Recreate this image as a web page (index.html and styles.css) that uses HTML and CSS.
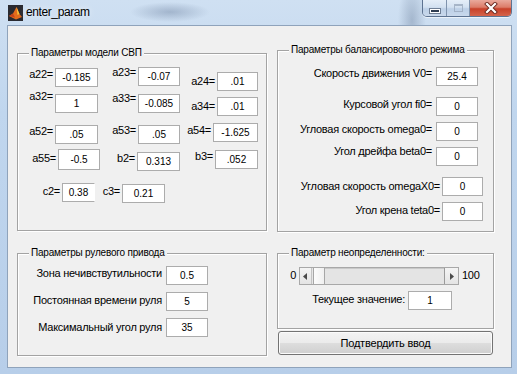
FILE: index.html
```html
<!DOCTYPE html>
<html lang="ru">
<head>
<meta charset="utf-8">
<title>enter_param</title>
<link rel="stylesheet" href="styles.css">
</head>
<body>
<div class="window">
  <div class="titlebar">
    <svg class="appicon" width="15" height="16" viewBox="0 0 15 16">
      <rect x="0" y="0" width="15" height="16" fill="#2a2a30"/>
      <path d="M1 11 L5 8.5 L8.5 2 L11.5 9 L14 12 L8 14.5 Z" fill="#e36b1c"/>
      <path d="M8.5 2 L11.5 9 L9.5 10 Z" fill="#f6c13a"/>
      <path d="M1 11 L5 8.5 L7 12.5 Z" fill="#c5421a"/>
    </svg>
    <span class="title">enter_param</span>
    <div class="controls">
      <div class="wbtn wmin"><span class="min-ic"></span></div>
      <div class="wbtn wmax"><span class="max-ic"></span></div>
      <div class="wbtn wclose">
        <svg width="14" height="12" viewBox="0 0 14 12">
          <path d="M3 2 L11 10 M11 2 L3 10" stroke="#6b2a20" stroke-width="4" stroke-linecap="square"/>
          <path d="M3 2 L11 10 M11 2 L3 10" stroke="#ffffff" stroke-width="2.2" stroke-linecap="square"/>
        </svg>
      </div>
    </div>
  </div>

  <div class="client">
    <div class="col col-left">
      <div class="panel p-model">
        <div class="ptitle">Параметры модели СВП</div>
        <div class="row mt9">
          <div class="fld"><span class="lab lw37 mt5">a22=</span><span class="box bw43 mt5">-0.185</span></div>
          <div class="fld"><span class="lab lw40 mt3">a23=</span><span class="box bw42 mt4">-0.07</span></div>
          <div class="fld"><span class="lab lw37 mt12">a24=</span><span class="box bw41 mt9">.01</span></div>
        </div>
        <div class="row mtn3">
          <div class="fld"><span class="lab lw37 mt2">a32=</span><span class="box bw43 mt6">1</span></div>
          <div class="fld"><span class="lab lw40 mt4">a33=</span><span class="box bw42 mt6">-0.085</span></div>
          <div class="fld"><span class="lab lw37 mt12">a34=</span><span class="box bw41 mt9">.01</span></div>
        </div>
        <div class="row mt7">
          <div class="fld"><span class="lab lw37 mt2">a52=</span><span class="box bw43 mt2">.05</span></div>
          <div class="fld"><span class="lab lw40 mt1">a53=</span><span class="box bw42 mt2">.05</span></div>
          <div class="fld"><span class="lab lw33 mt1">a54=</span><span class="box bw45 mt0">-1.625</span></div>
        </div>
        <div class="row mt5">
          <div class="fld"><span class="lab lw40 mt3">a55=</span><span class="box bw42 tall mt0">-0.5</span></div>
          <div class="fld"><span class="lab lw37 mt3">b2=</span><span class="box bw43 mt3">0.313</span></div>
          <div class="fld"><span class="lab lw35 mt1">b3=</span><span class="box bw43 mt1">.052</span></div>
        </div>
        <div class="row mt12">
          <div class="fld"><span class="lab lw44 mt2">c2=</span><span class="box bw33 open mt0">0.38</span></div>
          <div class="fld"><span class="lab lw27 mt2">c3=</span><span class="box bw43 mt1">0.21</span></div>
        </div>
      </div>

      <div class="panel p-rudder">
        <div class="ptitle">Параметры рулевого привода</div>
        <div class="row mt12">
          <span class="lab lw148 pr4 mt1">Зона нечивствутильности</span><span class="box bw42">0.5</span>
        </div>
        <div class="row mt7">
          <span class="lab lw148 pr4 mt2">Постоянная времени руля</span><span class="box bw42">5</span>
        </div>
        <div class="row mt7">
          <span class="lab lw148 pr4 mt3">Максимальный угол руля</span><span class="box bw42">35</span>
        </div>
      </div>
    </div>

    <div class="col col-right">
      <div class="panel p-balance">
        <div class="ptitle">Параметры балансировочного режима</div>
        <div class="row mt16">
          <span class="lab lw158 pr4 mt0">Скорость движения V0=</span><span class="box bw42">25.4</span>
        </div>
        <div class="row mt11">
          <span class="lab lw158 pr4 mt1">Курсовой угол fi0=</span><span class="box bw42">0</span>
        </div>
        <div class="row mt6">
          <span class="lab lw158 pr4 mt1">Угловая скорость omega0=</span><span class="box bw42">0</span>
        </div>
        <div class="row mt4">
          <span class="lab lw158 pr4 mt0">Угол дрейфа beta0=</span><span class="box bw42 mt2">0</span>
        </div>
        <div class="row mt11">
          <span class="lab lw164 mt3">Угловая скорость omegaX0=</span><span class="box bw41">0</span>
        </div>
        <div class="row mt6">
          <span class="lab lw164 mt2">Угол крена teta0=</span><span class="box bw41">0</span>
        </div>
      </div>

      <div class="panel p-uncert">
        <div class="ptitle">Параметр неопределенности:</div>
        <div class="row mt13">
          <span class="lab lw21 pr3 mt2">0</span>
          <div class="slider">
            <span class="sarrow sleft"><svg width="5" height="7" viewBox="0 0 5 7"><path d="M4 0 L0 3.5 L4 7 Z" fill="#4a4a4a"/></svg></span>
            <span class="sthumb"></span>
            <span class="strack"></span>
            <span class="sarrow sright"><svg width="5" height="7" viewBox="0 0 5 7"><path d="M1 0 L5 3.5 L1 7 Z" fill="#4a4a4a"/></svg></span>
          </div>
          <span class="lab max100 mt2">100</span>
        </div>
        <div class="row mt6">
          <span class="lab lw130 pr3 mt2">Текущее значение:</span><span class="box bw44">1</span>
        </div>
      </div>

      <button class="confirm" type="button">Подтвердить ввод</button>
    </div>
  </div>
</div>
</body>
</html>
```

FILE: styles.css
```css
* { box-sizing: border-box; }

html, body {
  margin: 0;
  padding: 0;
}

body {
  width: 517px;
  height: 374px;
  overflow: hidden;
  font-family: "Liberation Sans", Arial, sans-serif;
  color: #000;
}

.window {
  width: 517px;
  height: 374px;
  display: flex;
  flex-direction: column;
  background:
    radial-gradient(ellipse 40px 10px at 170px 12px, rgba(110,130,160,0.45), rgba(110,130,160,0) 100%),
    radial-gradient(ellipse 14px 40px at 412px 20px, rgba(90,110,140,0.35), rgba(90,110,140,0) 100%),
    linear-gradient(180deg, #cfe0f2 0%, #c0d6ee 30%, #b7cee9 100%);
}

/* ---------- title bar ---------- */
.titlebar {
  height: 25px;
  flex: none;
  display: flex;
  align-items: flex-start;
}

.appicon {
  margin: 5px 0 0 8px;
  flex: none;
}

.title {
  margin: 5px 0 0 3px;
  font-size: 12px;
  line-height: 15px;
  letter-spacing: -0.4px;
  color: #000;
  text-shadow: 0 0 6px rgba(255,255,255,0.9);
}

.controls {
  margin-left: auto;
  margin-right: 5px;
  display: flex;
  height: 17px;
  border: 1px solid #5d7391;
  border-top: none;
  border-radius: 0 0 5px 5px;
  overflow: hidden;
  box-shadow: 0 1px 0 rgba(255,255,255,0.6);
}

.wbtn {
  height: 16px;
  display: flex;
  align-items: center;
  justify-content: center;
}

.wmin, .wmax {
  background: linear-gradient(180deg, #e5eef8 0%, #d3e1f1 45%, #bccfe6 55%, #c9d9ec 100%);
  border-right: 1px solid #7f93ad;
}

.wmin { width: 24px; }
.wmax { width: 23px; }

.min-ic {
  width: 10px;
  height: 4px;
  margin-top: 5px;
  background: #2f3d52;
  border: 1px solid #fff;
  box-shadow: 0 0 0 1px #6f7f95;
}

.max-ic {
  width: 9px;
  height: 8px;
  border: 1px solid #9aa9bd;
  border-top-width: 2px;
  opacity: 0.8;
}

.wclose {
  width: 41px;
  background: linear-gradient(180deg, #e9a99c 0%, #dc7c69 45%, #c8412a 55%, #d4644b 100%);
}

/* ---------- client area ---------- */
.client {
  margin-left: 7px;
  width: 505px;
  height: 343px;
  border: 1px solid #8fa3bb;
  background: #f0f0f0;
  display: flex;
  padding-left: 9px;
  gap: 10px;
}

.col {
  display: flex;
  flex-direction: column;
}

.col-left {
  width: 250px;
  padding-top: 27px;
}

.col-right {
  width: 217px;
  padding-top: 24px;
}

.panel {
  border: 1px solid #a3a3a3;
  box-shadow: inset 1px 1px 0 #ffffff, 1px 1px 0 #ffffff;
}

.p-model { height: 178px; }
.p-rudder { height: 103px; margin-top: 22px; }
.p-balance { height: 182px; }
.p-uncert { height: 76px; margin-top: 21px; }

.ptitle {
  width: fit-content;
  height: 12px;
  margin: -7px 0 -5px 11px;
  padding: 0 2px;
  background: #f0f0f0;
  font-size: 10px;
  line-height: 12px;
  letter-spacing: -0.2px;
  white-space: nowrap;
}

.row {
  display: flex;
  align-items: flex-start;
}

.fld {
  display: flex;
  align-items: flex-start;
}

.lab {
  flex: none;
  font-size: 11px;
  line-height: 13px;
  letter-spacing: -0.25px;
  text-align: right;
  padding-right: 2px;
  white-space: nowrap;
}

.box {
  flex: none;
  height: 19px;
  background: #ffffff;
  border: 1px solid #acacac;
  font-size: 10px;
  line-height: 17px;
  text-align: center;
  white-space: nowrap;
}

.box.tall { height: 21px; line-height: 19px; }
.box.open { border-right-color: #ffffff; }

/* label widths */
.lw21 { width: 21px; }
.lw27 { width: 27px; }
.lw33 { width: 33px; }
.lw35 { width: 35px; }
.lw37 { width: 37px; }
.lw40 { width: 40px; }
.lw44 { width: 44px; }
.lw130 { width: 130px; }
.lw148 { width: 148px; }
.lw158 { width: 158px; }
.lw164 { width: 164px; }

.pr3 { padding-right: 3px; }
.pr4 { padding-right: 4px; }

/* box widths */
.bw33 { width: 33px; }
.bw41 { width: 41px; }
.bw42 { width: 42px; }
.bw43 { width: 43px; }
.bw44 { width: 44px; }
.bw45 { width: 45px; }

/* vertical offsets */
.mtn3 { margin-top: -3px; }
.mt0 { margin-top: 0; }
.mt1 { margin-top: 1px; }
.mt2 { margin-top: 2px; }
.mt3 { margin-top: 3px; }
.mt4 { margin-top: 4px; }
.mt5 { margin-top: 5px; }
.mt6 { margin-top: 6px; }
.mt7 { margin-top: 7px; }
.mt9 { margin-top: 9px; }
.mt11 { margin-top: 11px; }
.mt12 { margin-top: 12px; }
.mt13 { margin-top: 13px; }
.mt16 { margin-top: 16px; }

/* ---------- slider ---------- */
.slider {
  width: 160px;
  height: 18px;
  display: flex;
  border: 1px solid #a8a8a8;
  background: #e6e6e6;
}

.sarrow {
  flex: none;
  display: flex;
  align-items: center;
  justify-content: center;
  background: linear-gradient(180deg, #f4f4f4 0%, #e4e4e4 100%);
}

.sleft { width: 12px; border-right: 1px solid #c4c4c4; }
.sright { width: 14px; border-left: 1px solid #9a9a9a; }

.sthumb {
  flex: none;
  width: 12px;
  margin-left: 1px;
  background: linear-gradient(90deg, #fcfcfc 0%, #f0f0f0 100%);
  border: 1px solid #a6a6a6;
  border-top: none;
  border-bottom: none;
}

.strack {
  flex: 1;
  border-top: 1px solid #c9c9c9;
  background: #e4e4e4;
}

.max100 {
  padding: 0 0 0 3px;
  text-align: left;
}

/* ---------- button ---------- */
.confirm {
  margin: 2px 0 0 1px;
  width: 215px;
  height: 24px;
  border: 1px solid #737373;
  border-radius: 3px;
  background: linear-gradient(180deg, #f3f3f3 0%, #ebebeb 48%, #dddddd 52%, #cfcfcf 100%);
  box-shadow: inset 0 0 0 1px #fbfbfb;
  font-family: "Liberation Sans", Arial, sans-serif;
  font-size: 11px;
  letter-spacing: -0.2px;
  color: #000;
  padding: 0;
}
```
